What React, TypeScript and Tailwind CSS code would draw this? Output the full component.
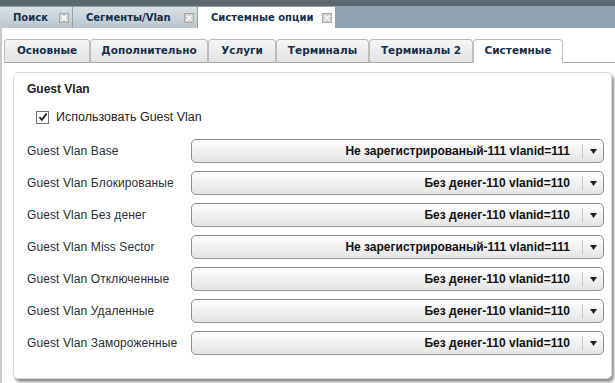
import React from 'react';

const topTabs = [
  { label: 'Поиск', w: 'w-[72px]', active: false },
  { label: 'Сегменты/Vlan', w: 'w-[124px]', active: false },
  { label: 'Системные опции', w: 'w-[137px]', active: true },
];

const subTabs = [
  { label: 'Основные', w: 'w-[86px]' },
  { label: 'Дополнительно', w: 'w-[118px]' },
  { label: 'Услуги', w: 'w-[68px]' },
  { label: 'Терминалы', w: 'w-[93px]' },
  { label: 'Терминалы 2', w: 'w-[104px]' },
  { label: 'Системные', w: 'w-[90px]', active: true },
];

const rows = [
  { label: 'Guest Vlan Base', value: 'Не зарегистрированый-111 vlanid=111' },
  { label: 'Guest Vlan Блокированые', value: 'Без денег-110 vlanid=110' },
  { label: 'Guest Vlan Без денег', value: 'Без денег-110 vlanid=110' },
  { label: 'Guest Vlan Miss Sector', value: 'Не зарегистрированый-111 vlanid=111' },
  { label: 'Guest Vlan Отключенные', value: 'Без денег-110 vlanid=110' },
  { label: 'Guest Vlan Удаленные', value: 'Без денег-110 vlanid=110' },
  { label: 'Guest Vlan Замороженные', value: 'Без денег-110 vlanid=110' },
];

function CloseIcon() {
  return (
    <span className="flex h-[10px] w-[10px] shrink-0 items-center justify-center border border-[#a9a9a9] bg-[#cfcfcf]">
      <svg width="8" height="8" viewBox="0 0 8 8">
        <path d="M1.5 1.5l5 5M6.5 1.5l-5 5" stroke="#fff" strokeWidth="1.4" />
      </svg>
    </span>
  );
}

function Select({ value }: { value: string }) {
  return (
    <div className="flex h-[24px] w-[413px] shrink-0 items-center rounded-[5px] border border-[#8e8e8e] bg-gradient-to-b from-white to-[#e4e4e4]">
      <span className="flex-1 whitespace-nowrap pr-[12px] text-right text-[12px] font-bold text-[#111]">{value}</span>
      <span className="h-[14px] w-px bg-[#c4c4c4]" />
      <span className="flex w-[20px] justify-center">
        <svg width="7" height="5" viewBox="0 0 7 5">
          <path d="M0 0h7L3.5 5z" fill="#222" />
        </svg>
      </span>
    </div>
  );
}

export default function App() {
  return (
    <div
      className="flex h-[383px] w-[615px] flex-col overflow-hidden bg-white"
      style={{ fontFamily: '"Liberation Sans", Arial, sans-serif' }}
    >
      <div className="flex h-[28px] shrink-0 items-end gap-px border-t-[6px] border-[#5c6770] bg-[#8fa2ad] pt-px">
        {topTabs.map((t) => (
          <div
            key={t.label}
            className={`flex h-[21px] items-center justify-between whitespace-nowrap pl-[13px] pr-[3px] text-[10px] font-bold text-[#16304a] ${t.w} ${
              t.active ? 'bg-white' : 'bg-gradient-to-b from-[#d9e1e6] to-[#b9c6ce]'
            }`}
            style={{ fontFamily: '"DejaVu Sans", Verdana, sans-serif' }}
          >
            <span>{t.label}</span>
            <CloseIcon />
          </div>
        ))}
      </div>

      <div className="flex flex-1 flex-col border-l-2 border-[#c8c8c8]">
        <div className="ml-[2px] mt-[11px] flex border-b border-[#a9a9a9]">
          {subTabs.map((t) => (
            <div
              key={t.label}
              className={`-mb-px flex h-[24px] items-center justify-center whitespace-nowrap rounded-t-[4px] border border-[#bcbcbc] text-[10.5px] font-bold text-[#16304a] ${t.w} ${
                t.active ? 'border-b-white bg-white' : 'border-b-[#a9a9a9] bg-gradient-to-b from-[#f6f6f6] to-[#e3e3e3]'
              }`}
              style={{ fontFamily: '"DejaVu Sans", Verdana, sans-serif' }}
            >
              {t.label}
            </div>
          ))}
        </div>

        <div className="ml-[11px] mt-[9px] h-[307px] w-[599px] rounded-[5px] border border-[#dadada] bg-white pl-[13px] pr-[7px] pt-[8px] shadow-[2px_3px_3px_rgba(0,0,0,0.45)]">
          <div className="h-[16px] text-[12px] font-bold leading-[16px] text-[#222]">Guest Vlan</div>
          <div className="mt-[12px] flex h-[16px] items-center pl-[9px] text-[12px] text-[#222]">
            <span className="flex h-[13px] w-[13px] items-center justify-center border border-[#707070] bg-white">
              <svg width="10" height="10" viewBox="0 0 10 10">
                <path d="M1.5 5.2l2.4 2.6L8.6 1.6" fill="none" stroke="#222" strokeWidth="1.8" />
              </svg>
            </span>
            <span className="ml-[7px] text-[12.5px]">Использовать Guest Vlan</span>
          </div>
          <div className="mt-[14px] flex flex-col gap-[8px]">
            {rows.map((r) => (
              <div key={r.label} className="flex items-center">
                <span className="w-[164px] shrink-0 text-[12px] tracking-[0.1px] text-[#2a2f36]">{r.label}</span>
                <Select value={r.value} />
              </div>
            ))}
          </div>
        </div>
      </div>
    </div>
  );
}
